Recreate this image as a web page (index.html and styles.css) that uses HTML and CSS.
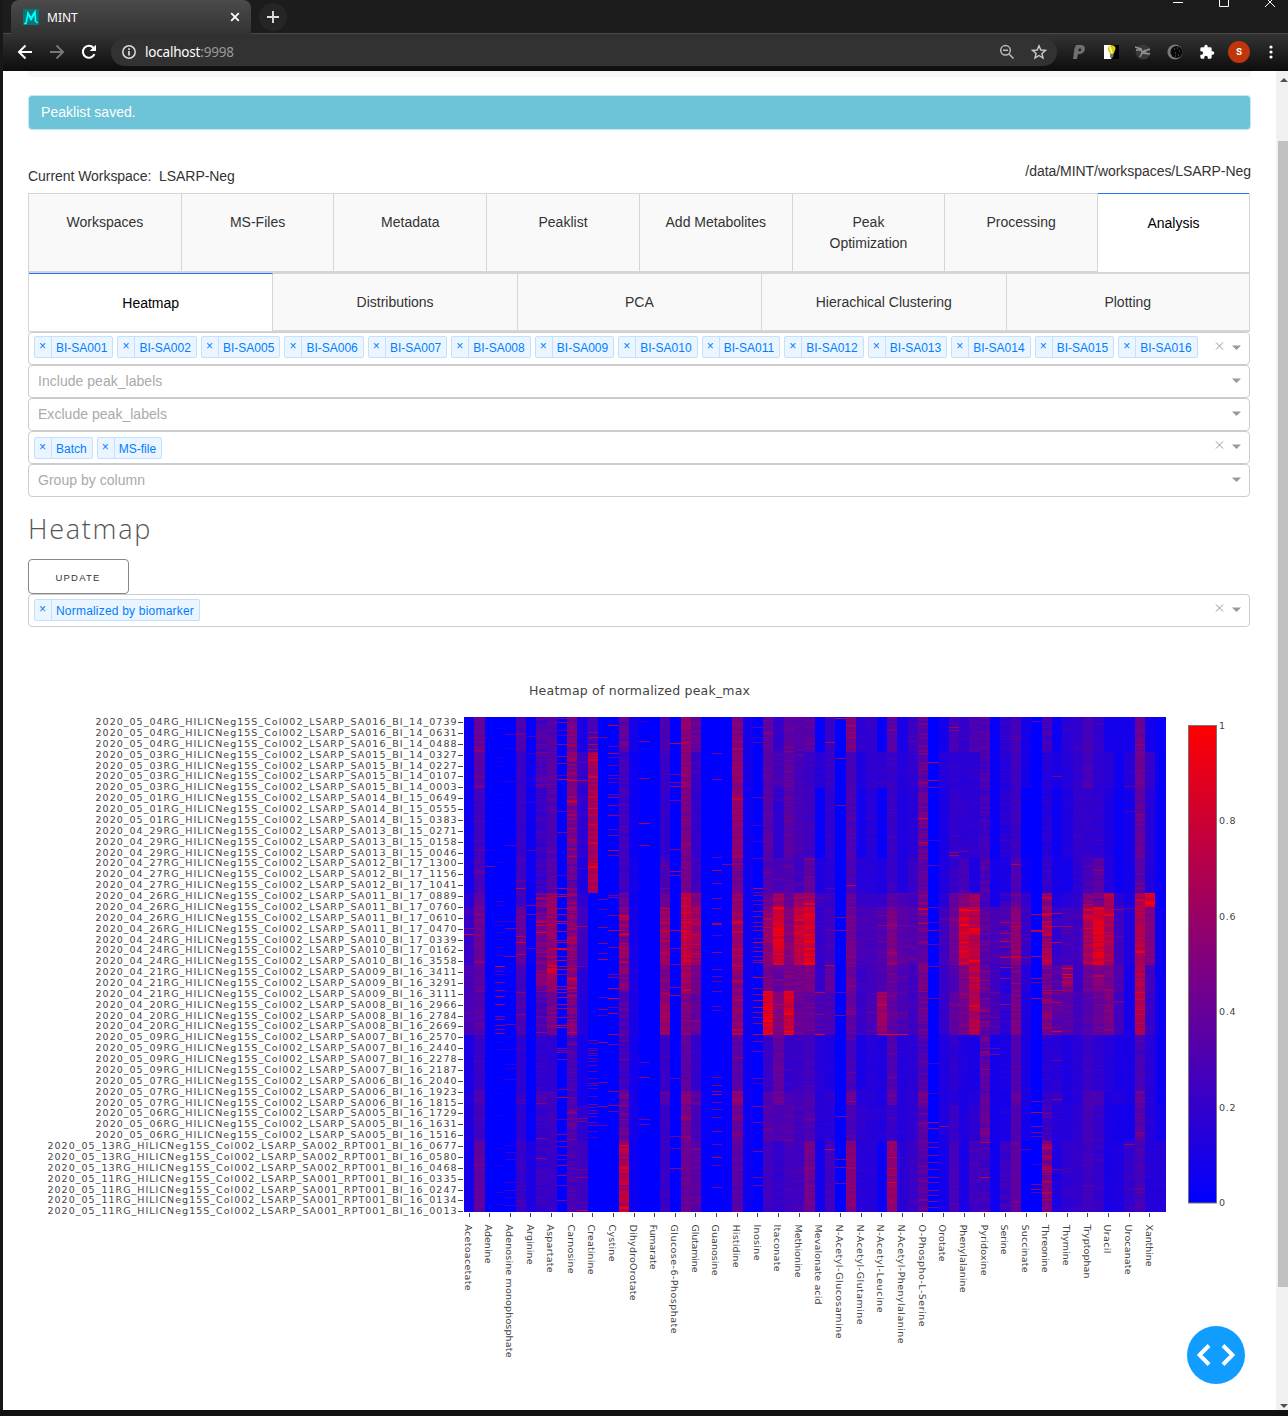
FILE: index.html
```html
<!DOCTYPE html>
<html lang="en">
<head>
<meta charset="utf-8">
<title>MINT</title>
<link rel="stylesheet" href="styles.css">
</head>
<body>
<header class="chrome">
  <div class="tabstrip">
    <div class="browser-tab">
      <svg class="favicon" width="16" height="16" viewBox="0 0 16 16"><rect width="16" height="16" fill="#06787a"/><path d="M1 14.500H3L5 4.500 8 10.500 12 3.500 12.500 12 14.500 14" fill="none" stroke="#0ff" stroke-width="1.700"/><path d="M4.500 2.500 8 8.500 12 2" fill="none" stroke="#0ff" stroke-width="1"/></svg>
      <span class="tab-title">MINT</span>
      <svg width="10" height="10" viewBox="0 0 10 10"><path d="M1.2 1.2 8.8 8.8M8.8 1.2 1.2 8.8" stroke="#fff" stroke-width="1.8"/></svg>
    </div>
    <div class="new-tab"><svg width="12" height="12" viewBox="0 0 12 12"><path d="M6 0V12M0 6H12" stroke="#ddd" stroke-width="1.9"/></svg></div>
    <svg class="controls" width="115" height="9" viewBox="0 0 115 9"><g fill="none" stroke="#fff" stroke-width="1"><path d="M0 2.5H10M46.5 0V6.5H55.5V0M92 7 101.500 -2.500M93 -2 102 7"/></g></svg>
  </div>
  <div class="toolbar">
    <span class="cell"><svg width="16" height="16" viewBox="0 0 16 16"><path d="M15 8H2M8.500 1.500 2 8l6.500 6.500" fill="none" stroke="#fff" stroke-width="2"/></svg></span>
    <span class="cell"><svg width="16" height="16" viewBox="0 0 16 16"><path d="M1 8H14M7.500 1.500 14 8l-6.500 6.500" fill="none" stroke="#777" stroke-width="2"/></svg></span>
    <span class="cell"><svg width="16" height="16" viewBox="0 0 16 16"><path d="M13.400 10.200A6 6 0 1 1 12.400 3.800" fill="none" stroke="#fff" stroke-width="2.100"/><path d="M15 .7V7H8.700z" fill="#fff"/></svg></span>
    <div class="omnibox">
      <svg width="16" height="16" viewBox="0 0 16 16"><circle cx="8" cy="8" r="6.200" fill="none" stroke="#ddd" stroke-width="1.500"/><path d="M8 7V11.500M8 4.300V6" stroke="#ddd" stroke-width="1.700"/></svg>
      <span class="url">localhost<i>:9998</i></span>
      <span class="cell push"><svg width="16" height="16" viewBox="0 0 16 16"><circle cx="6.500" cy="6.300" r="4.800" fill="none" stroke="#bbb" stroke-width="1.500"/><path d="M4 6.300H9M10 10 14.500 14.500" stroke="#bbb" stroke-width="1.500"/></svg></span>
      <span class="cell"><svg width="16" height="16" viewBox="0 0 16 16"><path d="M8 1.800 9.800 6 14.400 6.400 10.900 9.400 12 14 8 11.500 4 14 5.100 9.400 1.600 6.400 6.200 6z" fill="none" stroke="#ccc" stroke-width="1.400"/></svg></span>
    </div>
    <span class="cell"><svg width="16" height="16" viewBox="0 0 16 16"><path d="M5 1H10.500C16 1 14.500 10 9 10H7L6 15H2L3.500 4H4zM7.800 4.500 7.300 7.200H9C10.500 7 10.800 4.500 9.500 4.500z" fill="#707070" fill-rule="evenodd"/></svg></span>
    <span class="cell"><svg width="15" height="16" viewBox="0 0 15 16"><path d="M0 1H7V15H0z" fill="#fff"/><path d="M7 1H15V15H7z" fill="#000"/><path d="M4 6C3 0 12 0 11.500 5L9.500 10H6z" fill="#d8cf10"/><path d="M6 3 8 9" stroke="#fff89a" stroke-width="1.500"/><path d="M6 10H9.500V12L7.500 15 6 13z" fill="#777"/></svg></span>
    <span class="cell"><svg width="16" height="16" viewBox="0 0 16 16"><circle cx="8" cy="8" r="7.500" fill="#393939"/><path d="M0 3 6 5 7 8 15 5M5 13 7 9 15 10M1 6H6M9 6 11 9" fill="none" stroke="#929292" stroke-width="1.600"/></svg></span>
    <span class="cell"><svg width="16" height="16" viewBox="0 0 16 16"><circle cx="8" cy="8" r="7.600" fill="#777"/><circle cx="9.500" cy="8" r="6" fill="#090909"/><path d="M7 5h1M10 4h1M12 7h1M8 9h1M11 11h1M8 12h1" stroke="#777"/></svg></span>
    <span class="cell"><svg width="16" height="16" viewBox="0 0 24 24"><path d="M20.500 11H19V7a2 2 0 0 0-2-2h-4V3.500a2.500 2.500 0 0 0-5 0V5H4a2 2 0 0 0-2 2v3.800h1.500a2.700 2.700 0 0 1 0 5.400H2V20a2 2 0 0 0 2 2h3.800v-1.500a2.700 2.700 0 0 1 5.400 0V22H17a2 2 0 0 0 2-2v-4h1.500a2.500 2.500 0 0 0 0-5z" fill="#fff"/></svg></span>
    <span class="cell"><b class="avatar">s</b></span>
    <span class="cell"><svg width="4" height="14" viewBox="0 0 4 14"><g fill="#fff"><circle cx="2" cy="2" r="1.600"/><circle cx="2" cy="7" r="1.600"/><circle cx="2" cy="12" r="1.600"/></g></svg></span>
  </div>
</header>
<div class="viewport">
  <main class="page">
    <div class="strip"></div>
    <div class="alert">Peaklist saved.</div>
    <div class="workspace"><span class="current">Current Workspace:&nbsp; LSARP-Neg</span><span>/data/MINT/workspaces/LSARP-Neg</span></div>
    <nav class="tabs main-tabs">
      <div class="tab">Workspaces</div><div class="tab">MS-Files</div><div class="tab">Metadata</div><div class="tab">Peaklist</div><div class="tab">Add Metabolites</div><div class="tab">Peak Optimization</div><div class="tab">Processing</div><div class="tab active">Analysis</div>
    </nav>
    <nav class="tabs sub-tabs">
      <div class="tab active">Heatmap</div><div class="tab">Distributions</div><div class="tab">PCA</div><div class="tab">Hierachical Clustering</div><div class="tab">Plotting</div>
    </nav>
    <div class="select" data-values="BI-SA001,BI-SA002,BI-SA005,BI-SA006,BI-SA007,BI-SA008,BI-SA009,BI-SA010,BI-SA011,BI-SA012,BI-SA013,BI-SA014,BI-SA015,BI-SA016"></div>
    <div class="select"><span class="placeholder">Include peak_labels</span></div>
    <div class="select"><span class="placeholder">Exclude peak_labels</span></div>
    <div class="select low" data-values="Batch,MS-file"></div>
    <div class="select"><span class="placeholder">Group by column</span></div>
    <h4 class="heading">Heatmap</h4>
    <button class="update">UPDATE</button>
    <div class="select scaling" data-values="Normalized by biomarker"></div>
    <div class="plot">
      <svg class="axes" width="1250" height="740" viewBox="0 650 1250 740">
        <defs><linearGradient id="scale" x1="0" y1="0" x2="0" y2="1"><stop offset="0" stop-color="#f00"/><stop offset="1" stop-color="#00f"/></linearGradient></defs>
        <text class="plot-title" x="529" y="695" textLength="221">Heatmap of normalized peak_max</text>
        <rect x="1188.500" y="725.500" width="28" height="477.500" fill="url(#scale)" stroke="#777"/>
        <g id="labels"></g>
      </svg>
      <canvas class="heatmap" width="702" height="495"></canvas>
    </div>
    <div class="devtools"><svg width="38" height="22" viewBox="0 0 38 22"><path d="M12 1.500 2.500 11 12 20.500M26 1.500 35.500 11 26 20.500" fill="none" stroke="#fff" stroke-width="4"/></svg></div>
  </main>
  <aside class="scrollbar"><i class="arrow up"></i><i class="thumb"></i><i class="arrow down"></i></aside>
</div>
<script src="plot.js"></script>
</body>
</html>
```
FILE: styles.css
```css
*{box-sizing:border-box}
body{margin:0;width:1288px;height:1416px;overflow:hidden;background:#111;font-family:"Liberation Sans",Arial,sans-serif;font-size:14px;color:#333}
.chrome{height:71px;background:#1c1c1c;border-left:3px solid #181818}
.tabstrip{height:34px;display:flex;border-bottom:1px solid #4a4a4a}
.browser-tab{width:240px;height:34px;margin-left:8px;padding:0 11px 0 12px;border-radius:8px 8px 0 0;background:linear-gradient(#4b4b4b,#333);display:flex;align-items:center}
.tab-title{flex:1;margin-left:8px;font:12px "Noto Sans",sans-serif;color:#fff}
.new-tab{width:28px;height:28px;margin:3px 0 0 8px;border-radius:50%;background:#252525;display:grid;place-items:center}
.controls{margin-left:auto}
.toolbar{height:37px;display:flex;align-items:center;padding:0 1px 2px 6px;background:linear-gradient(#333,#0d0d0d)}
.cell{width:32px;flex:none;display:grid;place-items:center}
.omnibox{width:946px;height:28px;margin:0 6px;border-radius:14px;background:#323232;padding:0 2px 0 10px;display:flex;align-items:center}
.url{margin-left:8px;font:13.5px "Noto Sans",sans-serif;letter-spacing:-.2px;color:#fff}
.url i{font-style:normal;color:#999}
.push{margin-left:auto}
.avatar{width:22px;height:22px;border-radius:50%;background:#c0350b;color:#fff;font:500 12px/21px Roboto,sans-serif;text-align:center}
.viewport{height:1339px;display:flex;border-left:3px solid #161616;background:#fff}
.page{width:1273px;padding:0 26px 0 25px;position:relative}
.scrollbar{width:12px;background:#f1f1f1;padding:7px 0 2px 2px;display:flex;flex-direction:column}
.thumb{height:1146px;margin-top:59px;background:#c1c1c1}
.arrow{width:8px;height:4px;margin-left:2px;background:#505050;flex:none}
.up{clip-path:polygon(50% 0,100% 100%,0 100%)}
.down{clip-path:polygon(0 0,100% 0,50% 100%);margin-top:auto}
.strip{width:1223px;height:6px;background:#f7f7f7;border-radius:0 0 4px 4px}
.alert{height:35px;margin-top:18px;border:1px solid #c9e8ef;border-radius:4px;background:#6dc3d7;color:#fff;line-height:32px;padding-left:12px;width:1223px}
.alert{letter-spacing:.04px}
.workspace{display:flex;justify-content:space-between;height:63px;padding-top:32px;width:1223px;line-height:18px;letter-spacing:-.05px}
.current{padding-top:5px}
.tabs{display:flex;width:1222px;border:1px solid #d6d6d6;border-top:0}
.main-tabs{height:80px}
.sub-tabs{height:59px}
.tab{flex:1 1 0;padding:18px 35px;text-align:center;line-height:21px;background:#f9f9f9;border-top:1px solid #d6d6d6;border-right:1px solid #d6d6d6;border-bottom:1px solid #d6d6d6}
.main-tabs .tab{padding-left:20px;padding-right:20px}
.tab:last-child{border-right:0}
.main-tabs .tab:last-child{flex:0 0 151px}
.sub-tabs .tab:last-child{flex:0 0 242.500px}
.tab.active{background:#fff;border-top-color:#1975fa;border-bottom:0;color:#000;padding-top:19px}
.select{display:flex;align-items:center;height:33px;width:1222px;border:1px solid #ccc;border-radius:4px;padding:0 7px 0 5px;background:#fff}
.placeholder{color:#aaa;padding:0 0 2px 4px;letter-spacing:.03px}
.tag{display:flex;height:22px;margin:-3px 4.100px 0 0;border:1px solid #c2e0ff;border-radius:2px;background:#ebf5ff;color:#007eff;font-size:12px;line-height:22px}
.low .tag{margin-top:0}
.scaling .tag{letter-spacing:.2px;margin-top:-1px}
.tag-x{width:17px;border-right:1px solid #c2e0ff;text-align:center;line-height:19px;padding-right:1px}
.tag-label{padding:0 5px 0 4px}
.select-icons{margin:-3px 0 0 auto}
.heading{height:62px;margin:0;font:27px/64px "Open Sans",sans-serif;color:#555;font-weight:300;letter-spacing:1.750px}
.update{display:block;width:101px;height:35px;border:1px solid #888;border-radius:4px;background:#fff;color:#333;font:9.500px "Liberation Sans",sans-serif;letter-spacing:1.200px;padding:2px 1px 0 0}
.plot{position:relative;height:740px;margin:23px 0 0 -28px}
.axes{display:block;font-family:"DejaVu Sans",sans-serif;font-size:9.500px;fill:#444}
.plot-title{font-size:12.500px}
.heatmap{position:absolute;left:464px;top:67px}
.devtools{position:absolute;left:1184px;top:1255px;width:58px;height:58px;border-radius:50%;background:#119dff;display:grid;place-items:center}
```
FILE: plot.js
```js
document.querySelectorAll('.select').forEach(function (box) {
  var values = box.dataset.values;
  if (values) {
    box.innerHTML = values.split(',').map(function (v) {
      return '<span class="tag"><span class="tag-x">×</span><span class="tag-label">' + v + '</span></span>';
    }).join('');
  }
  box.insertAdjacentHTML('beforeend', '<svg class="select-icons" width="28" height="12" viewBox="0 0 28 12">' +
    (values ? '<path d="M2 1.500 9 8.500M9 1.500 2 8.500" stroke="#999"/>' : '') +
    '<path d="M18 4.500H27L22.500 9z" fill="#999"/></svg>');
});

// Row labels: date, suffix, run numbers
var groups = [
  ['05_04', 'SA016_BI_14', '0739 0631 0488'], ['05_03', 'SA015_BI_14', '0327 0227 0107 0003'],
  ['05_01', 'SA014_BI_15', '0649 0555 0383'], ['04_29', 'SA013_BI_15', '0271 0158 0046'],
  ['04_27', 'SA012_BI_17', '1300 1156 1041'], ['04_26', 'SA011_BI_17', '0889 0760 0610 0470'],
  ['04_24', 'SA010_BI_17', '0339 0162'], ['04_24', 'SA010_BI_16', '3558'],
  ['04_21', 'SA009_BI_16', '3411 3291 3111'], ['04_20', 'SA008_BI_16', '2966 2784 2669'],
  ['05_09', 'SA007_BI_16', '2570 2440 2278 2187'], ['05_07', 'SA006_BI_16', '2040 1923 1815'],
  ['05_06', 'SA005_BI_16', '1729 1631 1516'], ['05_13', 'SA002_RPT001_BI_16', '0677 0580 0468'],
  ['05_11', 'SA001_RPT001_BI_16', '0335 0247 0134 0013']
];
var out = '', n = 0;
groups.forEach(function (g) {
  g[2].split(' ').forEach(function (run) {
    var y = 722.1 + n * 10.87, wide = g[1].length > 12;
    n++;
    out += '<text x="' + (wide ? 47.5 : 95.5) + '" y="' + Math.round(y + 3) + '" textLength="' + (wide ? 409 : 361) + '">2020_' + g[0] + 'RG_HILICNeg15S_Col002_LSARP_' + g[1] + '_' + run + '</text>' +
      '<rect x="458" y="' + Math.round(y) + '" width="5" height="1"/>';
  });
});
// Column labels with their drawn length
var names = 'Acetoacetate:66,Adenine:39,Adenosine monophosphate:133,Arginine:40,Aspartate:48,Carnosine:49,Creatinine:50,Cystine:37,DihydroOrotate:76,Fumarate:45,Glucose-6-Phosphate:109,Glutamine:48,Guanosine:51,Histidine:43,Inosine:36,Itaconate:47,Methionine:53,Mevalonate acid:80,N-Acetyl-Glucosamine:114,N-Acetyl-Glutamine:100,N-Acetyl-Leucine:88,N-Acetyl-Phenylalanine:119,O-Phospho-L-Serine:102,Orotate:37,Phenylalanine:68,Pyridoxine:51,Serine:30,Succinate:48,Threonine:48,Thymine:41,Tryptophan:54,Uracil:29,Urocanate:50,Xanthine:42';
names.split(',').forEach(function (s, i) {
  var p = s.split(':'), x = 469 + i * 20.632;
  out += '<text transform="translate(' + Math.round(x - 4.3) + ' 1224.5) rotate(90)" textLength="' + p[1] + '">' + p[0] + '</text>' +
    '<rect x="' + Math.round(x - .5) + '" y="1213" width="1" height="4"/>';
});
['1', '0.8', '0.6', '0.4', '0.2', '0'].forEach(function (t, i) {
  out += '<text x="1219" y="' + Math.round(729 + i * 95.4) + '"' + (t.length > 1 ? ' textLength="16.500"' : '') + '>' + t + '</text>';
});
document.getElementById('labels').innerHTML = out;

// Mean percentage of each compound for each acquisition batch
var bands = [0, 35, 71, 141, 176, 190, 248, 275, 318, 374, 388, 424, 495];
var means = `5 5 6 8 14 22 28 28 10 12 12 8
40 35 25 28 38 42 35 32 22 30 25 38
0 0 0 0 0 0 0 0 0 0 0 0
0 0 0 0 0 0 0 0 0 0 0 0
0 0 0 0 0 0 0 0 0 0 0 0
30 22 22 25 25 40 25 30 18 22 18 22
2 6 5 5 4 3 0 0 0 0 2 11
28 28 22 22 45 45 45 30 18 30 20 22
32 35 30 35 60 60 62 45 18 25 25 22
0 0 0 0 0 0 0 0 0 0 0 0
50 52 52 40 55 55 60 48 28 30 35 28
10 22 18 12 18 25 15 13 8 8 18 25
28 64 66 68 0 0 0 0 0 0 0 0
0 0 0 0 0 0 0 0 0 0 0 0
0 0 0 0 0 0 0 0 0 0 0 0
38 25 25 25 38 55 50 32 25 40 38 68
8 5 5 8 5 8 10 10 8 8 8 5
0 0 0 0 0 0 0 0 0 0 0 0
0 0 0 0 0 0 0 0 0 0 0 0
30 22 20 30 40 60 45 60 22 32 22 22
0 0 0 0 0 0 0 0 0 0 0 0
55 53 48 45 75 75 62 50 38 50 45 42
40 22 20 25 50 62 45 40 20 35 28 35
0 0 0 0 0 0 0 0 1 3 2 1
0 0 0 0 0 0 0 0 0 0 0 0
1 1 1 1 1 2 2 2 2 3 2 2
50 56 58 45 58 60 52 55 35 56 42 35
8 8 6 6 6 6 5 5 4 5 5 5
0 0 0 0 0 0 0 0 0 0 0 0
38 35 35 32 42 55 45 84 22 30 32 25
20 28 18 28 62 82 38 50 38 40 30 20
38 36 36 32 40 52 45 80 20 28 32 25
32 28 28 25 60 75 45 42 22 28 25 25
35 22 25 38 65 85 48 40 25 30 30 45
2 15 2 12 25 20 20 30 15 15 15 8
22 22 18 15 22 25 38 30 12 18 15 25
0 0 0 0 0 0 0 0 0 0 0 0
48 28 30 30 38 45 42 38 28 42 28 52
18 12 8 15 22 28 22 22 10 15 18 15
20 18 15 15 20 28 25 28 14 15 15 15
3 18 3 12 20 32 30 60 12 12 14 4
35 22 22 22 35 48 38 38 32 35 22 58
10 14 12 12 30 35 30 30 14 14 14 16
22 18 15 22 25 32 25 25 16 18 18 22
38 38 40 35 42 42 45 42 30 42 35 35
0 0 0 0 0 0 0 0 0 0 0 0
8 14 10 12 15 25 22 20 12 12 12 8
28 18 20 20 38 42 30 38 18 15 22 28
20 16 18 28 50 80 48 45 12 10 12 10
30 16 18 12 60 72 72 68 10 14 18 25
33 28 25 30 28 35 40 38 38 35 40 25
3 4 4 8 8 28 25 28 8 8 8 6
18 14 16 10 20 30 15 18 10 8 10 22
28 26 24 30 40 55 45 48 32 38 32 38
8 8 0 5 20 22 15 12 10 10 8 1
0 0 0 0 0 0 0 0 0 0 0 0
25 15 15 20 60 62 42 50 15 20 25 52
5 10 5 8 12 20 32 35 14 18 15 12
16 14 12 8 15 25 50 35 12 12 14 18
20 20 20 18 18 25 22 25 16 15 18 20
28 28 20 28 48 65 42 32 22 30 28 25
20 18 18 35 45 84 50 40 18 28 22 20
8 16 12 14 68 68 45 48 14 12 10 10
8 6 4 5 18 25 30 25 10 14 8 12
8 14 8 8 10 12 8 8 10 10 8 20
42 42 40 35 65 68 70 68 28 40 35 28
8 22 16 14 86 50 25 22 16 14 14 14
3 3 3 3 3 5 5 5 5 5 8 14`.split('\n').map(function (r) { return r.split(' ').map(Number); });
// Single samples that stand out: column, then row:percent
var spikes = `0 211:55,217:90
2 20:12,133:14,149:55
3 11:12,40:12,44:10,49:12,64:10,77:10,85:10,101:10,145:12,173:10,184:25,188:22,204:25,208:20,215:20,222:15,230:22,238:30,249:90,254:35,257:30,265:60,273:62,279:65,287:65,299:55,302:50,308:60,312:50,316:65,325:15,332:12,360:10,376:10,398:12,431:12,448:15,475:20,487:15
4 17:38,31:14,64:22,128:38,204:28,211:55,239:50,274:16,307:48,332:16,347:20,351:22,362:20,428:18,435:25,442:28,465:25,473:35,480:22,488:30
5 171:80,219:75,225:90,237:70,275:55,297:60
6 19:30,36:20,50:12,62:14,68:12,85:20,133:38,188:62,197:50,231:38
7 35:50,62:38,67:42,181:70,208:80,215:92,235:60,245:65,257:60,315:65,386:55,421:60,441:60
8 67:45,134:48,171:40,317:48
9 1:52,5:58,13:35,18:25,27:60,39:55,46:55,58:38,62:80,94:42,115:55,158:38,171:75,177:75,179:75,191:65,197:72,204:78,206:75,214:75,223:55,225:65,231:90,232:90,239:50,243:75,249:65,252:75,257:60,269:65,272:68,275:70,280:68,287:75,291:70,300:65,308:80,310:72,331:55,333:55,335:50,342:50,372:45,380:75,402:35,417:60,424:55,429:50,438:50,442:45,448:70,458:65,468:45,483:50
10 63:90,57:62,83:70,97:65,261:92,278:75,315:80,327:55
11 45:40,63:65,151:28,209:65,249:50,401:55,404:50,452:50,460:60,493:80
12 15:60,20:65,27:72,32:68,40:80,79:90,91:92,146:82,323:40,326:35,331:40,333:38,336:42,338:40,341:38,344:35,348:45,354:42,361:45,366:45,368:42,371:40,379:35,387:45,390:45,393:45,396:44,399:43,405:45,408:42,414:35,420:30
13 20:45,182:50,192:35,210:60,226:60,236:45,242:72,280:42,292:60,298:35,325:65,365:55,389:60,408:40
14 8:75,29:40,36:70,40:38,48:40,58:42,61:38,65:38,77:38,80:55,88:55,98:60,112:38,118:55,133:75,138:45,178:50,180:52,198:50,213:70,230:45,257:40,260:50,271:75,281:85,290:38,296:70,317:65,327:50,374:60,388:55,394:45
15 202:75,217:92,226:70,245:80
17 4:20,24:55,61:60,106:70,128:60,345:40,360:60,402:50,407:50
19 171:50,205:85,214:82,273:60
20 26:75,57:48,65:55,69:75,83:50,132:55,154:65,158:55,213:75,231:55,247:45,270:60,278:65,361:45,419:45,431:40,451:60
22 206:80,217:82,227:85,236:80,432:60
24 36:50,62:60,140:42,153:65,166:55,181:50,191:42,206:65,207:68,218:38,235:62,252:50,259:48,264:45,274:45,289:38,293:38,360:45,368:50,374:60,377:68,385:50,392:45,400:45,414:55,427:45,440:65,448:38,470:50
25 147:50
28 10:35,20:25,25:45,80:45,108:32,124:25,141:38,171:80,175:45,178:50,183:42,187:45,194:62,199:62,205:60,209:60,213:60,221:45,225:85,230:45,234:65,239:55,243:55,245:60,260:80,271:55,277:60,283:70,290:65,295:65,300:55,306:60,317:75,324:55,334:45,361:45,366:35,389:60,405:50,434:55,460:55,468:50
29 210:85,274:98,289:95,317:95
30 212:98,216:98,287:70
31 274:96,317:98
34 275:80,297:60,317:98
35 25:78,171:40,248:75,432:80
36 1:80,41:55,88:55,200:55,213:55,275:38,298:52,399:55,442:50,450:60,466:50
37 8:70,168:75,294:60,424:60
40 279:80,287:85,317:98,208:55
41 208:65,317:92,465:90
42 208:50,317:98
44 101:82,125:80,191:85,192:80,206:75,406:60
45 45:70,63:65,70:45,123:30,148:38,190:45,205:35,213:60,227:42,249:50,281:45,346:25,376:25,405:65,411:60,425:45,430:55,438:55,445:50,452:45,460:60,465:50,473:60,478:50,484:55,490:50
46 409:65
47 10:65,13:60,135:60,138:65,204:45,287:55
48 134:50,201:90,215:90
50 352:65,425:75,460:85
51 337:50,331:45,300:50,275:45
52 205:65,216:70,224:75,240:72,250:70,261:60,287:60
53 147:70,209:80
54 240:55,372:20,432:38
55 4:38,197:75,213:85,214:70,239:65,261:62,265:45,281:65,384:50,395:70,409:62,415:60,419:45,447:30,467:55,472:60,475:40
56 180:85,196:85,209:90,273:72,424:60,440:65
57 59:50,196:70,209:65,225:70,273:70,285:75,314:90,343:50,382:60,452:45
58 209:65,251:92,257:95,260:90,264:75,268:60
63 192:60,284:55
64 69:42,94:30,191:42,427:60`.split('\n').map(function (r) {
  var p = r.split(' ');
  return [Number(p[0]), p[1].split(',').map(function (q) { return q.split(':').map(Number); })];
});
var seed = 41;
function rand() { seed = (seed * 16807) % 2147483647; return seed / 2147483647; }
var ctx = document.querySelector('.heatmap').getContext('2d'), step = 701.5 / 68;
function cell(c, y, h, v) {
  v = Math.max(0, Math.min(100, v)) * 2.55;
  var x = Math.round(c * step);
  ctx.fillStyle = 'rgb(' + Math.round(v) + ',0,' + Math.round(255 - v) + ')';
  ctx.fillRect(x, y, Math.round((c + 1) * step) - x, h);
}
var noisy = [7, 10, 15, 44, 50, 52, 56, 57];
means.forEach(function (m, c) {
  for (var b = 0; b < 12; b++) {
    for (var y = bands[b]; y < bands[b + 1];) {
      var h = rand() < .5 ? 1 : 2, spread = m[b] * (noisy.indexOf(c) >= 0 ? .5 : .23);
      h = Math.min(h, bands[b + 1] - y);
      cell(c, y, h, m[b] + (rand() - .5) * spread + (m[b] > 12 && rand() < .05 ? m[b] * .28 : 0));
      y += h;
    }
  }
});
spikes.forEach(function (s) { s[1].forEach(function (p) { cell(s[0], p[0], 1, p[1]); }); });
```
